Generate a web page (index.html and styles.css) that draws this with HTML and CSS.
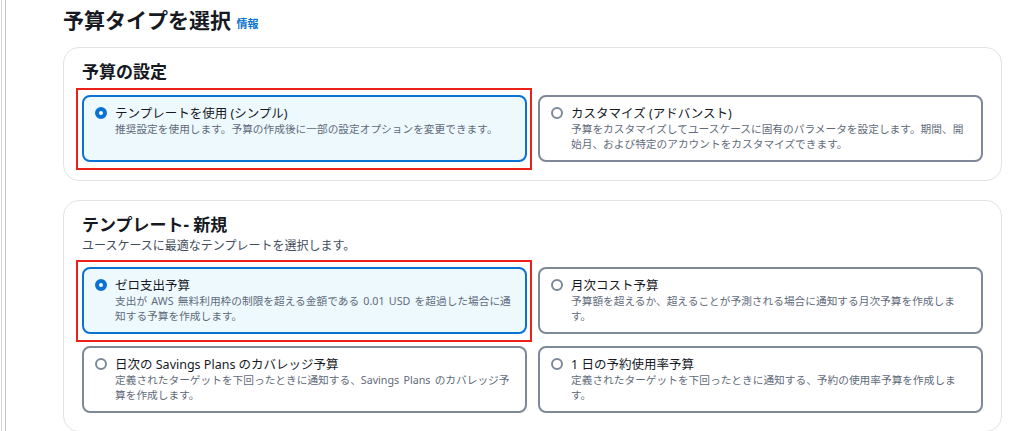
FILE: index.html
```html
<!DOCTYPE html>
<html lang="ja">
<head>
    <meta charset="utf-8">
    <link rel="stylesheet" href="styles.css">
</head>
<body>
    <div id="page">
        <!-- Left edge of the console frame -->
        <div class="edge"></div>

        <div id="content">
            <h1 class="page-title">予算タイプを選択 <a class="info-link" href="#">情報</a></h1>

            <!-- Budget setup -->
            <div class="panel">
                <h2 class="panel-title">予算の設定</h2>
                <div class="tiles">
                    <div class="tile selected marked">
                        <span class="radio"></span>
                        <div class="tile-text">
                            <div class="tile-label">テンプレートを使用 (シンプル)</div>
                            <div class="tile-desc">推奨設定を使用します。予算の作成後に一部の設定オプションを変更できます。</div>
                        </div>
                    </div>
                    <div class="tile">
                        <span class="radio"></span>
                        <div class="tile-text">
                            <div class="tile-label">カスタマイズ (アドバンスト)</div>
                            <div class="tile-desc">予算をカスタマイズしてユースケースに固有のパラメータを設定します。期間、開始月、および特定のアカウントをカスタマイズできます。</div>
                        </div>
                    </div>
                </div>
            </div>

            <!-- Templates -->
            <div class="panel">
                <h2 class="panel-title">テンプレート- 新規</h2>
                <p class="panel-subtitle">ユースケースに最適なテンプレートを選択します。</p>
                <div class="tiles">
                    <div class="tile selected marked">
                        <span class="radio"></span>
                        <div class="tile-text">
                            <div class="tile-label">ゼロ支出予算</div>
                            <div class="tile-desc">支出が AWS 無料利用枠の制限を超える金額である 0.01 USD を超過した場合に通知する予算を作成します。</div>
                        </div>
                    </div>
                    <div class="tile">
                        <span class="radio"></span>
                        <div class="tile-text">
                            <div class="tile-label">月次コスト予算</div>
                            <div class="tile-desc">予算額を超えるか、超えることが予測される場合に通知する月次予算を作成します。</div>
                        </div>
                    </div>
                    <div class="tile">
                        <span class="radio"></span>
                        <div class="tile-text">
                            <div class="tile-label">日次の Savings Plans のカバレッジ予算</div>
                            <div class="tile-desc">定義されたターゲットを下回ったときに通知する、Savings Plans のカバレッジ予算を作成します。</div>
                        </div>
                    </div>
                    <div class="tile">
                        <span class="radio"></span>
                        <div class="tile-text">
                            <div class="tile-label">1 日の予約使用率予算</div>
                            <div class="tile-desc">定義されたターゲットを下回ったときに通知する、予約の使用率予算を作成します。</div>
                        </div>
                    </div>
                </div>
            </div>
        </div>
    </div>
</body>
</html>
```

FILE: styles.css
```css
/* Global Styles */
html, body {
    margin: 0;
    padding: 0;
    height: 100%;
    overflow: hidden;
    background: #ffffff;
}

body {
    font-family: "Noto Sans", "Noto Sans CJK JP", sans-serif;
    color: #16191f;
}

/* Layout */
#page {
    display: flex;
    height: 100%;
}

.edge {
    width: 3px;
    margin-left: 1px;
    border-left: 1px solid #d9d9d9;
    border-right: 1px solid #c4c4c4;
    flex-shrink: 0;
}

#content {
    padding-left: 57px;
    width: 939px;
}

/* Page Title */
.page-title {
    margin: 6px 0 9px;
    font-size: 21px;
    line-height: 28px;
    font-weight: 700;
    color: #16191f;
}

.info-link {
    font-size: 11px;
    font-weight: 700;
    color: #0972d3;
    text-decoration: none;
}

/* Panels */
.panel {
    border: 1px solid #e3e3e3;
    border-radius: 16px;
    padding: 13px 18px 18px;
    margin-bottom: 19px;
}

.panel-title {
    margin: 0;
    font-size: 17px;
    line-height: 22px;
    font-weight: 700;
}

.panel-subtitle {
    margin: 2px 0 0;
    font-size: 12px;
    line-height: 16px;
    color: #414d5c;
}

/* Tiles */
.tiles {
    display: grid;
    grid-template-columns: 1fr 1fr;
    gap: 12px 11px;
    margin-top: 12px;
}

.panel-subtitle + .tiles {
    margin-top: 13px;
}

.tile {
    position: relative;
    display: flex;
    align-items: flex-start;
    gap: 8px;
    padding: 8px 10px 8px 11px;
    min-height: 47px;
    border: 2px solid #7d8998;
    border-radius: 8px;
    background: #ffffff;
}

.tile.selected {
    border-color: #0972d3;
    background: #eef9fe;
}

/* Red highlight box drawn over the selected tiles */
.tile.marked::after {
    content: "";
    position: absolute;
    top: -9px;
    left: -8px;
    right: -7px;
    bottom: -10px;
    border: 2px solid #ec2119;
    pointer-events: none;
}

.radio {
    flex-shrink: 0;
    width: 12px;
    height: 12px;
    margin-top: 2px;
    box-sizing: border-box;
    border: 2px solid #7d8998;
    border-radius: 50%;
    background: #ffffff;
}

.tile.selected .radio {
    border: 4px solid #0972d3;
}

.tile-text {
    flex: 1;
}

.tile-label {
    font-size: 12.5px;
    line-height: 17px;
    color: #16191f;
}

.tile-desc {
    font-size: 10.7px;
    line-height: 15px;
    word-spacing: 1.5px;
    color: #5f6b7a;
}
```
